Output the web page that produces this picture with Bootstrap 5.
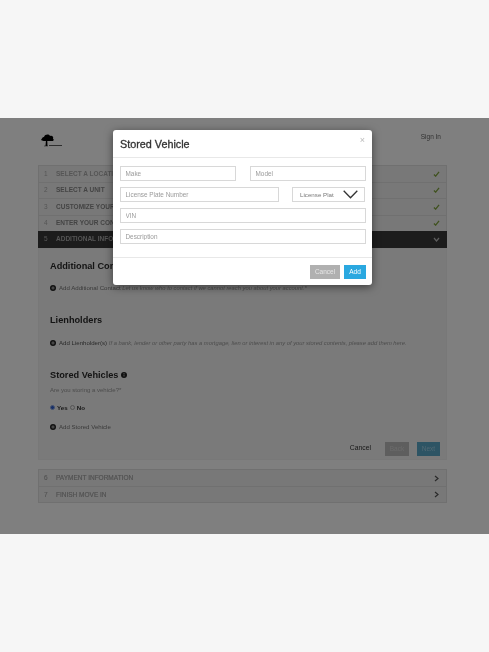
<!DOCTYPE html>
<html lang="en">
<head>
<meta charset="utf-8">
<title>Stored Vehicle</title>
<link href="https://cdn.jsdelivr.net/npm/bootstrap@5.3.0/dist/css/bootstrap.min.css" rel="stylesheet">
<style>
html,body{height:652px;overflow:hidden}
body{background:#f6f6f6;font-family:"Liberation Sans",Arial,sans-serif;font-size:6.5px;color:#333}
.stage{position:relative;margin-top:118px;height:416px;background:#fff;overflow:hidden;padding:0 42px 0 38px;filter:blur(.35px)}
.dim{position:absolute;inset:0;background:rgba(0,0,0,.5)}
.topbar{height:47px;position:relative}
.logo-mark{position:absolute;left:2px;top:15px;width:26px;height:16px}
.signin{position:absolute;right:6px;top:14px;font-size:6.5px;color:#666}
.step{height:16.5px;background:#f1f1f1;border:1px solid #e0e0e0;border-bottom-width:0;padding:0 6px 0 5px;font-size:6.5px;font-weight:700;color:#888}
.step:last-child{border-bottom-width:1px}
.step .num{width:12px;font-weight:400;color:#aaa}
.step.faint{color:#aaa}
.step.on{background:#383838;color:#aaa;border-color:#383838}
.step.on .num{color:#aaa}
.step.closed{height:17px;color:#a0a0a0;font-weight:400;-webkit-text-stroke:.15px #a0a0a0}
.tick{width:7px;height:6px}
.chev{width:7px;height:7px}
.panel{background:#f4f4f4;height:212px;padding:11px 6px 0 11px;border:1px solid #f0f0f0}
.ttl{font-size:9.2px;font-weight:700;color:#2a2a2a;margin:0;line-height:12px}
.addline{font-size:6.1px;color:#777;line-height:8px}
.addline em{color:#9a9a9a;font-size:5.8px}
.addline b{font-weight:400;color:#555}
.plus{width:6px;height:6px;flex:none;margin-right:3px}
.ask{font-size:6px;color:#999;line-height:8px}
.yn{font-size:6.2px;font-weight:700;color:#333;line-height:8px}
.rad{width:5px;height:5px;border-radius:50%;border:1px solid #aaa;background:#f4f4f4;display:inline-block;margin-right:2px}
.rad.sel{background:#2f5fd0;border-color:#8fa8e0}
.rad.second{margin-left:2px}
.info{width:6px;height:6px;vertical-align:0}
.gap-a{margin-top:12.5px}
.gap-b{margin-top:21.5px}
.gap-c{margin-top:13px}
.gap-d{margin-top:22px}
.gap-e{margin-top:5px}
.gap-f{margin-top:10px}
.gap-g{margin-top:11px}
.actions{margin-top:11px;font-size:6.8px;color:#333;gap:8px}
.act-cancel{margin-right:6px}
.pbtn{height:14px;font-size:6.5px;line-height:14px;text-align:center}
.pbtn.bk{background:#bcbcbc;color:#d6d6d6;width:24px}
.pbtn.nx{background:#5aa8c8;color:#9fd0e6;width:23px}
.lower{margin-top:9.500px}
.dlg{position:absolute;left:113px;top:12px;width:259px;height:155px;border:0;border-radius:3px;box-shadow:0 2px 8px rgba(0,0,0,.5);background:#fff;color:#333}
.dlg .modal-header{height:28px;padding:2px 7px 0;border-bottom:1px solid #e8e8e8;display:flex;align-items:center;justify-content:space-between}
.dlg .modal-title{font-size:10.8px;font-weight:400;-webkit-text-stroke:.3px #333;color:#333;line-height:1}
.closex{font-size:9px;color:#bbb;background:none;border:0;padding:0;line-height:1;position:relative;top:-4px}
.dlg .modal-body{padding:8px 6px 0 7px;height:99px}
.fld{height:15px;border:1px solid #d8d8d8;background:#fff;padding:0 4.500px;font-size:6.4px;color:#999;border-radius:0;width:100%;display:block;font-family:inherit}
.fld::placeholder{color:#9a9a9a;opacity:1}
.fldrow{gap:14px;margin-bottom:6px}
.fldrow2{gap:13px;margin-bottom:6px}
.w-a{width:116px}
.w-b{width:159px}
.fld-vin{margin-bottom:6px}
.sel-fld{height:15px;border:1px solid #d8d8d8;padding:0 0 0 7px;font-size:6.2px;color:#777;width:73px;flex:none}
.sel-chev{width:15px;height:9px;margin-right:6px;margin-left:auto}
.dlg .modal-footer{height:28px;padding:0 6px 0 0;border-top:1px solid #e8e8e8;display:flex;justify-content:flex-end;align-items:center;gap:4px;flex-wrap:nowrap}
.mbtn{border:0;border-radius:0;padding:0;height:14px;font-size:6.5px;color:#fff;font-family:inherit;margin:0!important}
.mbtn.grey{background:#b0b0b0;width:30px;color:#e6e6e6}
.mbtn.blue{background:#2aa8e0;width:22px}
</style>
</head>
<body>
<div class="stage">
  <div class="topbar">
    <svg class="logo-mark" viewBox="0 0 26 16"><path d="M1 7c1-1 1-3 3-3 1-3 5-3 6-1 2-1 4 1 3 3 1 0 1 1 0 2H8l-1 0 0 0c-2 0-5 0-6-1z" fill="#000"/><path d="M6 7h1.200l.3 6H5.500z" fill="#000"/><path d="M4 13h4" stroke="#222" stroke-width=".5"/><path d="M9 12.500h13" stroke="#333" stroke-width=".8"/></svg>
    <span class="signin">Sign In</span>
  </div>
  <div>
    <div class="step faint d-flex align-items-center"><span class="num">1</span><span class="flex-grow-1">SELECT A LOCATION</span><svg class="tick" viewBox="0 0 8 7"><path d="M1 4l2 2 4-5" fill="none" stroke="#7fa33c" stroke-width="1.500"/></svg></div>
    <div class="step d-flex align-items-center"><span class="num">2</span><span class="flex-grow-1">SELECT A UNIT</span><svg class="tick" viewBox="0 0 8 7"><path d="M1 4l2 2 4-5" fill="none" stroke="#7fa33c" stroke-width="1.500"/></svg></div>
    <div class="step d-flex align-items-center"><span class="num">3</span><span class="flex-grow-1">CUSTOMIZE YOUR UNIT</span><svg class="tick" viewBox="0 0 8 7"><path d="M1 4l2 2 4-5" fill="none" stroke="#7fa33c" stroke-width="1.500"/></svg></div>
    <div class="step d-flex align-items-center"><span class="num">4</span><span class="flex-grow-1">ENTER YOUR CONTACT INFO</span><svg class="tick" viewBox="0 0 8 7"><path d="M1 4l2 2 4-5" fill="none" stroke="#7fa33c" stroke-width="1.500"/></svg></div>
    <div class="step on d-flex align-items-center"><span class="num">5</span><span class="flex-grow-1">ADDITIONAL INFORMATION</span><svg class="chev" viewBox="0 0 7 7"><path d="M1 2l2.500 3L6 2" fill="none" stroke="#bbb" stroke-width="1.200"/></svg></div>
  </div>
  <div class="panel">
    <h2 class="ttl">Additional Contacts</h2>
    <div class="addline d-flex align-items-center gap-a"><svg class="plus" viewBox="0 0 6 6"><circle cx="3" cy="3" r="3" fill="#222"/><path d="M3 1.300v3.400M1.300 3h3.400" stroke="#ccc" stroke-width=".8"/></svg><span>Add Additional Contact <em>Let us know who to contact if we cannot reach you about your account.*</em></span></div>
    <h2 class="ttl gap-b">Lienholders</h2>
    <div class="addline d-flex align-items-center gap-c"><svg class="plus" viewBox="0 0 6 6"><circle cx="3" cy="3" r="3" fill="#222"/><path d="M3 1.300v3.400M1.300 3h3.400" stroke="#ccc" stroke-width=".8"/></svg><span><b>Add Lienholder(s)</b> <em>If a bank, lender or other party has a mortgage, lien or interest in any of your stored contents, please add them here.</em></span></div>
    <h2 class="ttl gap-d">Stored Vehicles <svg class="info" viewBox="0 0 6 6"><circle cx="3" cy="3" r="3" fill="#222"/><path d="M3 2.500v2M3 1v1" stroke="#ccc" stroke-width=".8"/></svg></h2>
    <div class="ask gap-e">Are you storing a vehicle?*</div>
    <div class="yn d-flex align-items-center gap-f"><span class="rad sel"></span>Yes<span class="rad second"></span>No</div>
    <div class="addline d-flex align-items-center gap-g"><svg class="plus" viewBox="0 0 6 6"><circle cx="3" cy="3" r="3" fill="#222"/><path d="M3 1.300v3.400M1.300 3h3.400" stroke="#ccc" stroke-width=".8"/></svg><span>Add Stored Vehicle</span></div>
    <div class="actions d-flex justify-content-end align-items-center"><span class="act-cancel">Cancel</span><span class="pbtn bk">Back</span><span class="pbtn nx">Next</span></div>
  </div>
  <div class="lower">
    <div class="step closed d-flex align-items-center"><span class="num">6</span><span class="flex-grow-1">PAYMENT INFORMATION</span><svg class="chev" viewBox="0 0 7 7"><path d="M2 1l3 2.500L2 6" fill="none" stroke="#555" stroke-width="1.200"/></svg></div>
    <div class="step closed d-flex align-items-center"><span class="num">7</span><span class="flex-grow-1">FINISH MOVE IN</span><svg class="chev" viewBox="0 0 7 7"><path d="M2 1l3 2.500L2 6" fill="none" stroke="#555" stroke-width="1.200"/></svg></div>
  </div>
  <div class="dim"></div>
  <div class="modal-content dlg">
    <div class="modal-header"><h5 class="modal-title">Stored Vehicle</h5><button class="closex" type="button">×</button></div>
    <div class="modal-body">
      <div class="d-flex fldrow"><input class="fld w-a" placeholder="Make"><input class="fld w-a" placeholder="Model"></div>
      <div class="d-flex fldrow2"><input class="fld w-b" placeholder="License Plate Number"><div class="sel-fld d-flex align-items-center"><span>License Plat</span><svg class="sel-chev" viewBox="0 0 15 9"><path d="M.7.700l6.800 7 6.800-7" fill="none" stroke="#333" stroke-width="1.300"/></svg></div></div>
      <input class="fld fld-vin" placeholder="VIN">
      <input class="fld" placeholder="Description">
    </div>
    <div class="modal-footer"><button class="mbtn grey" type="button">Cancel</button><button class="mbtn blue" type="button">Add</button></div>
  </div>
</div>
<script src="https://cdn.jsdelivr.net/npm/bootstrap@5.3.0/dist/js/bootstrap.bundle.min.js"></script>
</body>
</html>
